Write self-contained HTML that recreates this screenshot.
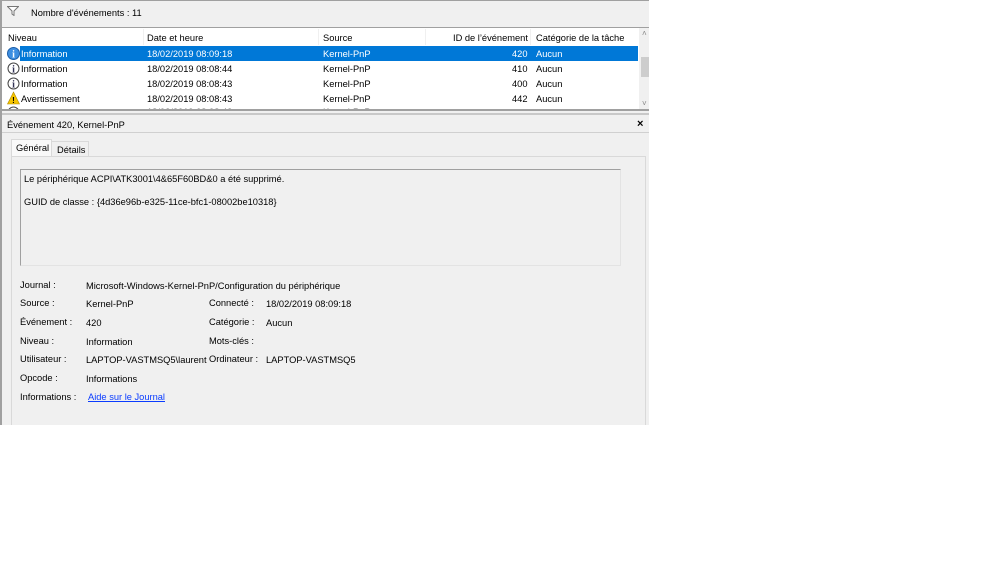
<!DOCTYPE html>
<html><head><meta charset="utf-8"><style>
*{margin:0;padding:0;box-sizing:border-box}
body{width:1000px;height:563px;background:#fff;position:relative;overflow:hidden;font-family:"Liberation Sans",sans-serif;font-size:9.3px;color:#000}
.a{position:absolute;white-space:nowrap}
</style></head><body>
<div class="a" style="left:0;top:0;width:649px;height:425px;background:#f0f0f0;border-left:2px solid #a0a0a0;border-top:1px solid #a0a0a0"></div>
<svg class="a" style="left:7px;top:6px" width="12" height="10"><path d="M0.5 0.5H11.5L7 5V9.5L5 8V5Z" fill="#fff" stroke="#777"/></svg>
<div class="a" style="left:31px;top:8px">Nombre d'événements : 11</div>
<div class="a" style="left:2px;top:27px;width:647px;height:84px;background:#fff;border-top:1px solid #a0a0a0;border-bottom:2px solid #a0a0a0;overflow:hidden">
 <svg class="a" style="left:5px;top:78px" width="13" height="13"><circle cx="6.5" cy="6.5" r="5.5" fill="#fff" stroke="#444"/></svg>
 <div class="a" style="left:145px;top:79px;color:#666">18/02/2019 08:08:43</div>
 <div class="a" style="left:321px;top:79px;color:#666">Kernel-PnP</div>
</div>
<div class="a" style="left:8px;top:33px">Niveau</div>
<div class="a" style="left:147px;top:33px">Date et heure</div>
<div class="a" style="left:323px;top:33px">Source</div>
<div class="a" style="left:453px;top:33px">ID de l’événement</div>
<div class="a" style="left:536px;top:33px">Catégorie de la tâche</div>
<div class="a" style="left:143px;top:29px;width:1px;height:16px;background:#f0f0f0"></div>
<div class="a" style="left:318px;top:29px;width:1px;height:16px;background:#f0f0f0"></div>
<div class="a" style="left:425px;top:29px;width:1px;height:16px;background:#f0f0f0"></div>
<div class="a" style="left:530px;top:29px;width:1px;height:16px;background:#f0f0f0"></div>
<div class="a" style="left:20px;top:46px;width:618px;height:15px;background:#0078d7"></div>
<div class="a" style="left:639px;top:28px;width:10px;height:81px;background:#f0f0f0"></div>
<div class="a" style="left:641px;top:57px;width:8px;height:20px;background:#cdcdcd"></div>
<div class="a" style="left:642px;top:29px;color:#888;font-size:8px">˄</div>
<div class="a" style="left:642px;top:99px;color:#888;font-size:8px">˅</div>
<svg class="a" style="left:7px;top:47px" width="13" height="62">
<circle cx="6.5" cy="6.5" r="6" fill="#3d8ee0" stroke="#1e5fa8"/><text x="6.5" y="10.5" font-size="10" fill="#fff" text-anchor="middle" font-family="Liberation Serif" font-weight="bold">i</text>
<circle cx="6.5" cy="21.5" r="5.5" fill="#fff" stroke="#444"/><text x="6.5" y="25.5" font-size="10" fill="#335" text-anchor="middle" font-family="Liberation Serif" font-weight="bold">i</text>
<circle cx="6.5" cy="36.5" r="5.5" fill="#fff" stroke="#444"/><text x="6.5" y="40.5" font-size="10" fill="#335" text-anchor="middle" font-family="Liberation Serif" font-weight="bold">i</text>
<path d="M6.5 45L12.5 57H0.5Z" fill="#f5c400" stroke="#b08a00" stroke-width=".6"/><text x="6.5" y="56" font-size="8" text-anchor="middle" font-weight="bold">!</text>
</svg>
<div class="a" style="left:21px;top:49px;color:#fff">Information</div>
<div class="a" style="left:147px;top:49px;color:#fff">18/02/2019 08:09:18</div>
<div class="a" style="left:323px;top:49px;color:#fff">Kernel-PnP</div>
<div class="a" style="left:512px;top:49px;color:#fff">420</div>
<div class="a" style="left:536px;top:49px;color:#fff">Aucun</div>
<div class="a" style="left:21px;top:64px">Information</div><div class="a" style="left:147px;top:64px">18/02/2019 08:08:44</div><div class="a" style="left:323px;top:64px">Kernel-PnP</div><div class="a" style="left:512px;top:64px">410</div><div class="a" style="left:536px;top:64px">Aucun</div>
<div class="a" style="left:21px;top:79px">Information</div><div class="a" style="left:147px;top:79px">18/02/2019 08:08:43</div><div class="a" style="left:323px;top:79px">Kernel-PnP</div><div class="a" style="left:512px;top:79px">400</div><div class="a" style="left:536px;top:79px">Aucun</div>
<div class="a" style="left:21px;top:94px">Avertissement</div><div class="a" style="left:147px;top:94px">18/02/2019 08:08:43</div><div class="a" style="left:323px;top:94px">Kernel-PnP</div><div class="a" style="left:512px;top:94px">442</div><div class="a" style="left:536px;top:94px">Aucun</div>
<div class="a" style="left:2px;top:113px;width:647px;height:2px;background:#c8c8c8"></div>
<div class="a" style="left:2px;top:115px;width:647px;height:18px;background:#f0f0f0;border-bottom:1px solid #d0d0d0"></div>
<div class="a" style="left:7px;top:120px">Événement 420, Kernel-PnP</div>
<div class="a" style="left:637px;top:118px;font-weight:bold;font-size:11px">×</div>
<div class="a" style="left:11px;top:139px;width:41px;height:18px;background:#f9f9f9;border:1px solid #d9d9d9;border-bottom:none"></div>
<div class="a" style="left:16px;top:143px">Général</div>
<div class="a" style="left:52px;top:141px;width:37px;height:16px;border:1px solid #d9d9d9;border-left:none;border-bottom:none"></div>
<div class="a" style="left:57px;top:145px">Détails</div>
<div class="a" style="left:11px;top:156px;width:635px;height:269px;border:1px solid #d9d9d9;border-bottom:none"></div>
<div class="a" style="left:20px;top:169px;width:601px;height:97px;background:#f0f0f0;border:1px solid #a0a0a0;border-right-color:#e3e3e3;border-bottom-color:#e3e3e3"></div>
<div class="a" style="left:24px;top:174px">Le périphérique ACPI\ATK3001\4&amp;65F60BD&amp;0 a été supprimé.</div>
<div class="a" style="left:24px;top:197px">GUID de classe : {4d36e96b-e325-11ce-bfc1-08002be10318}</div>
<div class="a" style="left:20px;top:280px">Journal :</div><div class="a" style="left:86px;top:281px">Microsoft-Windows-Kernel-PnP/Configuration du périphérique</div>
<div class="a" style="left:20px;top:298px">Source :</div><div class="a" style="left:86px;top:299px">Kernel-PnP</div>
<div class="a" style="left:209px;top:298px">Connecté :</div><div class="a" style="left:266px;top:299px">18/02/2019 08:09:18</div>
<div class="a" style="left:20px;top:317px">Événement :</div><div class="a" style="left:86px;top:318px">420</div>
<div class="a" style="left:209px;top:317px">Catégorie :</div><div class="a" style="left:266px;top:318px">Aucun</div>
<div class="a" style="left:20px;top:336px">Niveau :</div><div class="a" style="left:86px;top:337px">Information</div>
<div class="a" style="left:209px;top:336px">Mots-clés :</div>
<div class="a" style="left:20px;top:354px">Utilisateur :</div><div class="a" style="left:86px;top:355px">LAPTOP-VASTMSQ5\laurent</div>
<div class="a" style="left:209px;top:354px">Ordinateur :</div><div class="a" style="left:266px;top:355px">LAPTOP-VASTMSQ5</div>
<div class="a" style="left:20px;top:373px">Opcode :</div><div class="a" style="left:86px;top:374px">Informations</div>
<div class="a" style="left:20px;top:392px">Informations :</div><div class="a" style="left:88px;top:392px;color:#0a3cff;text-decoration:underline">Aide sur le Journal</div>
</body></html>
